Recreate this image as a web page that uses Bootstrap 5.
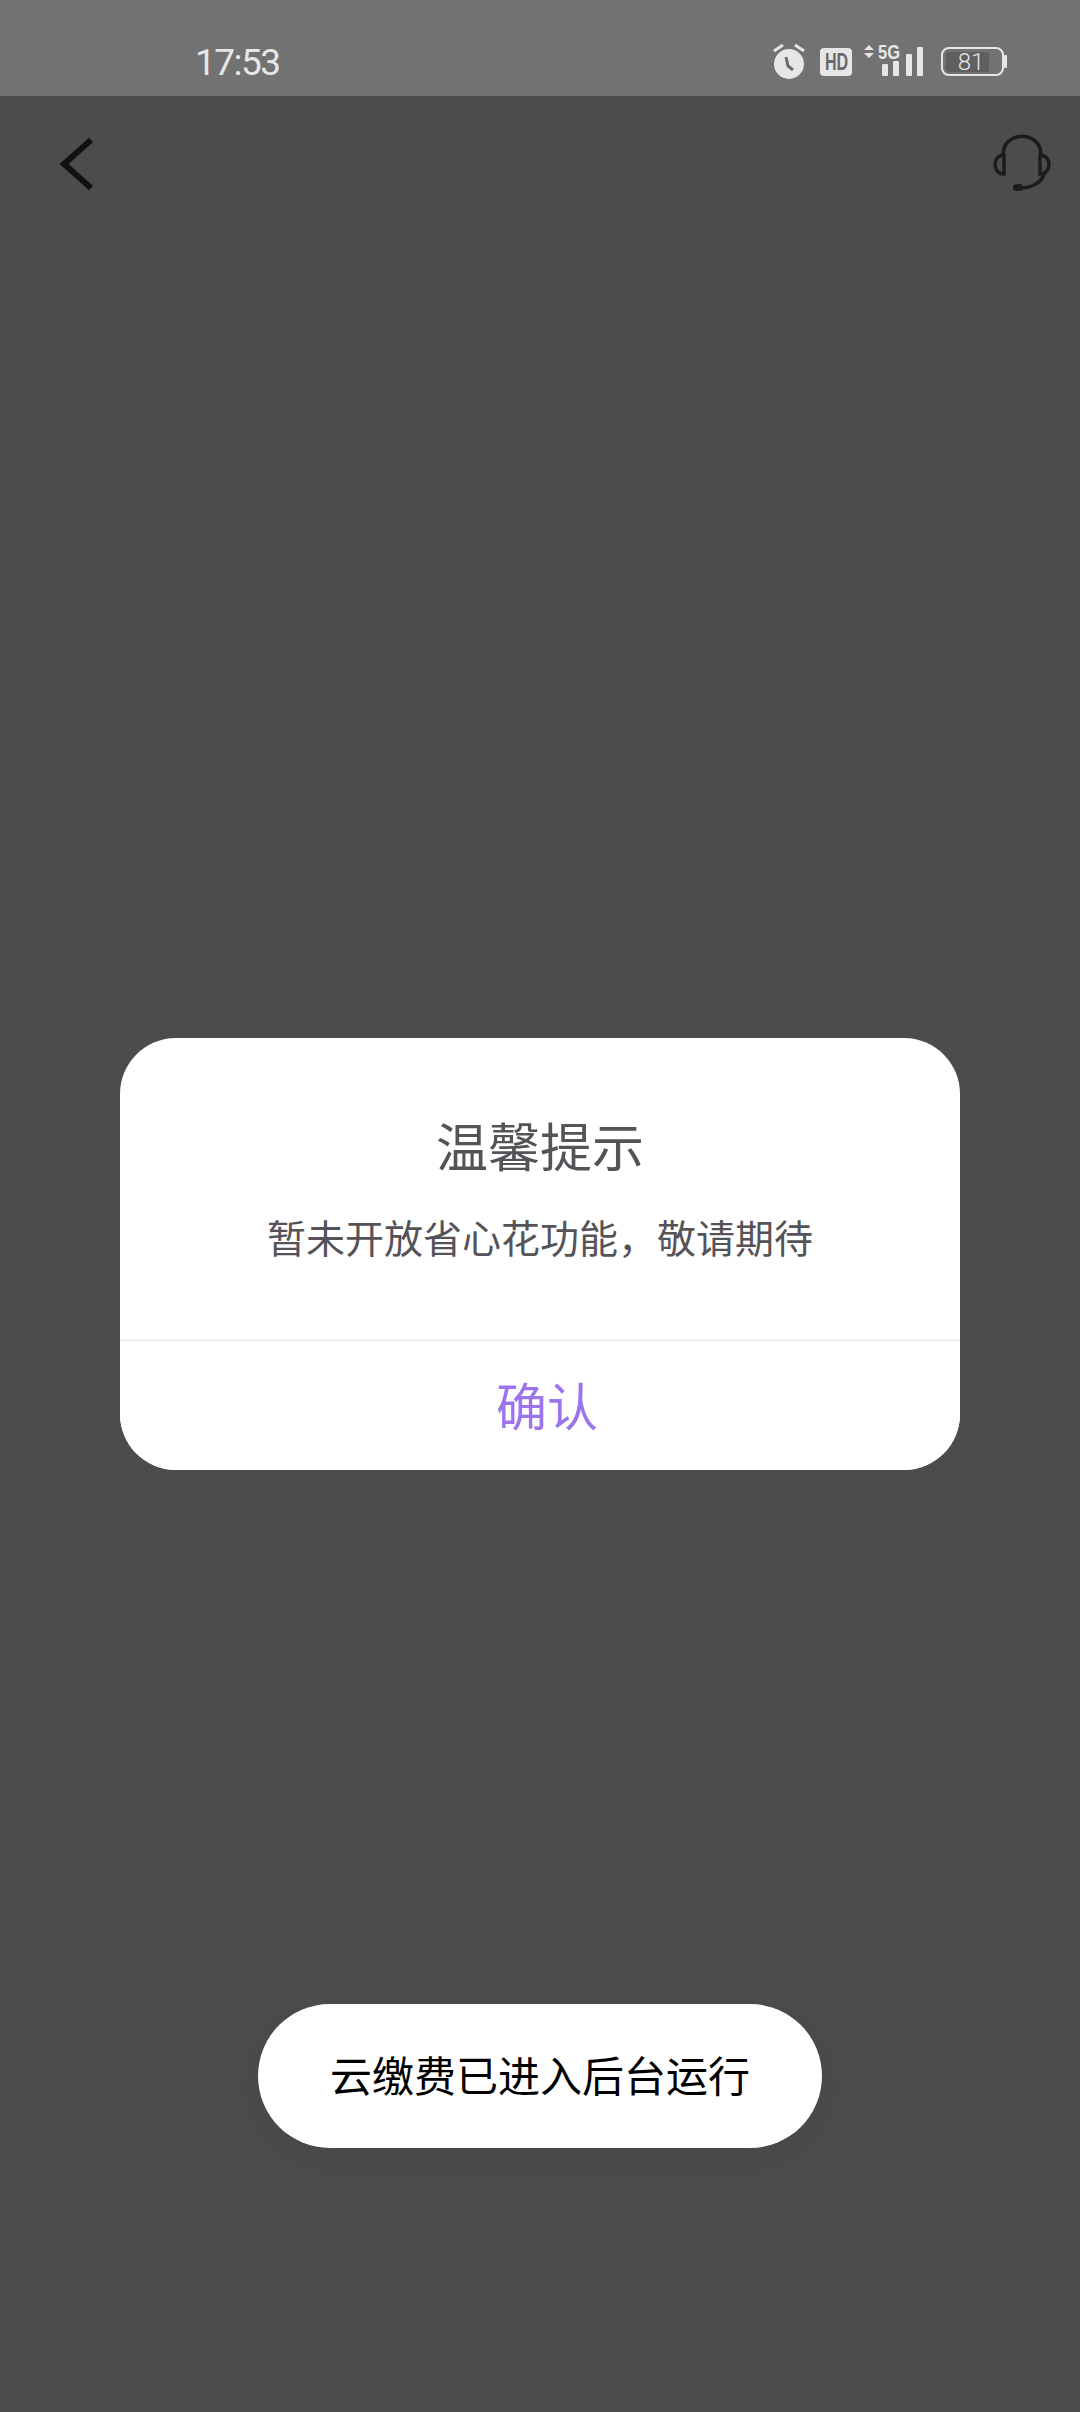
<!DOCTYPE html>
<html lang="zh-CN">
<head>
  <meta charset="UTF-8" />
  <meta name="viewport" content="width=device-width, initial-scale=1.0" />
  <title>云缴费</title>
  <link href="https://cdn.jsdelivr.net/npm/bootstrap@5.3.0/dist/css/bootstrap.min.css" rel="stylesheet">
  <style>
    body {
      background: #4c4c4c;
      font-family: "Noto Sans CJK SC", "Liberation Sans", sans-serif;
    }
    .screen {
      width: 1080px;
      height: 2412px;
      overflow: hidden;
    }
    .status-strip {
      height: 96px;
      padding: 27px 73px 0 195px;
      background: #727272;
      color: #e6e6e6;
    }
    .clock {
      font-family: Roboto, sans-serif;
      font-weight: 400;
      font-size: 37px;
      line-height: 36px;
      letter-spacing: -1.5px;
      margin-top: 2px;
    }
    .alarm-icon {
      margin-right: 13px;
    }
    .hd-tag {
      width: 32px;
      height: 28px;
      border-radius: 4px;
      background: #e6e6e6;
      color: #6a6a6a;
      font: 700 23px/28px "Liberation Sans", sans-serif;
    }
    .hd-tag span {
      display: inline-block;
      transform: scaleX(.7);
    }
    .signal-icon {
      margin-left: 12px;
    }
    .battery-icon {
      margin-left: 17px;
    }
    .top-bar {
      height: 134px;
      padding: 0 26px 0 50px;
    }
    .tip-card {
      width: 840px;
      margin: 808px auto 0;
      border: 0;
      border-radius: 56px;
      overflow: hidden;
    }
    .tip-body {
      padding: 77px 0 79px;
      color: #565358;
    }
    .tip-title {
      font-size: 52px;
      line-height: 60px;
      font-weight: 400;
      margin: 0 0 37px;
    }
    .tip-text {
      font-size: 39px;
      line-height: 48px;
      margin: 0;
    }
    .tip-foot {
      height: 131px;
      padding: 0 0 0 14px;
      border: 0;
      border-top: 3px solid #f2f2f2;
      border-radius: 0;
      background: #fff;
      color: #9c74ee;
      font-size: 51px;
      line-height: 125px;
    }
    .run-toast {
      width: 564px;
      height: 144px;
      margin: 534px auto 0;
      padding-bottom: 5px;
      border-radius: 72px;
      background: #fff;
      color: #000;
      font-size: 42px;
      box-shadow: 0 10px 40px rgba(0, 0, 0, .07);
    }
  </style>
</head>
<body>
  <div class="screen d-flex flex-column">
    <!-- status bar -->
    <div class="status-strip d-flex align-items-center">
      <div class="clock">17:53</div>
      <div class="d-flex align-items-center ms-auto">
        <svg class="alarm-icon" width="36" height="36" viewBox="0 0 36 36">
          <circle cx="18" cy="20" r="15" fill="#e6e6e6"/>
          <path d="M3 7l9-6M33 7l-9-6" stroke="#e6e6e6" stroke-width="3" fill="none"/>
          <path d="M15 13l2 9 5 4" stroke="#6a6a6a" stroke-width="3" fill="none"/>
        </svg>
        <div class="hd-tag text-center"><span>HD</span></div>
        <svg class="signal-icon" width="60" height="48" viewBox="0 -6 60 48">
          <path d="M0 6l5-5 5 5zM0 9l5 5 5-5z" fill="#e6e6e6"/>
          <text x="14" y="15" font-family="Liberation Sans, sans-serif" font-weight="700" font-size="20" textLength="22" lengthAdjust="spacingAndGlyphs" fill="#e6e6e6">5G</text>
          <rect x="18" y="20" width="6" height="12" rx="1" fill="#e6e6e6"/>
          <rect x="29" y="17" width="6" height="15" rx="1" fill="#e6e6e6"/>
          <rect x="42" y="10" width="6" height="22" rx="1" fill="#e6e6e6"/>
          <rect x="53" y="3" width="6" height="29" rx="1" fill="#e6e6e6"/>
        </svg>
        <svg class="battery-icon" width="66" height="36" viewBox="0 0 66 36">
          <rect x="1" y="4" width="61" height="27" rx="7" fill="none" stroke="#e6e6e6" stroke-width="2"/>
          <rect x="5" y="8" width="43" height="20" rx="3" fill="#5f5f5f"/>
          <rect x="63" y="11" width="3" height="13" rx="1" fill="#e6e6e6"/>
          <text x="30" y="26" text-anchor="middle" font-family="Roboto, sans-serif" font-weight="300" font-size="24" fill="#e6e6e6">81</text>
        </svg>
      </div>
    </div>

    <!-- top bar -->
    <div class="top-bar d-flex align-items-center justify-content-between">
      <svg width="44" height="60" viewBox="0 0 44 60">
        <path d="M41 7L14 31l27 24" fill="none" stroke="#111" stroke-width="6"/>
      </svg>
      <svg width="64" height="64" viewBox="0 0 64 64">
        <path d="M13 24C13 -1 51 -1 51 24" fill="none" stroke="#1c1c1c" stroke-width="3.5"/>
        <path d="M14 24v19c-12 0-12-19 0-19zM50 24v19c12 0 12-19 0-19z" fill="none" stroke="#1c1c1c" stroke-width="3.5"/>
        <path d="M54 43c-2 8-12 14-24 14" fill="none" stroke="#1c1c1c" stroke-width="3.5"/>
        <rect x="23" y="53" width="10" height="7" rx="3.5" fill="#1c1c1c"/>
      </svg>
    </div>

    <!-- dialog -->
    <div class="card tip-card">
      <div class="tip-body text-center">
        <h5 class="tip-title">温馨提示</h5>
        <p class="tip-text">暂未开放省心花功能，敬请期待</p>
      </div>
      <div class="card-footer tip-foot text-center">确认</div>
    </div>

    <!-- toast -->
    <div class="run-toast d-flex align-items-center justify-content-center">云缴费已进入后台运行</div>
  </div>
  <script src="https://cdn.jsdelivr.net/npm/bootstrap@5.3.0/dist/js/bootstrap.bundle.min.js"></script>
</body>
</html>
